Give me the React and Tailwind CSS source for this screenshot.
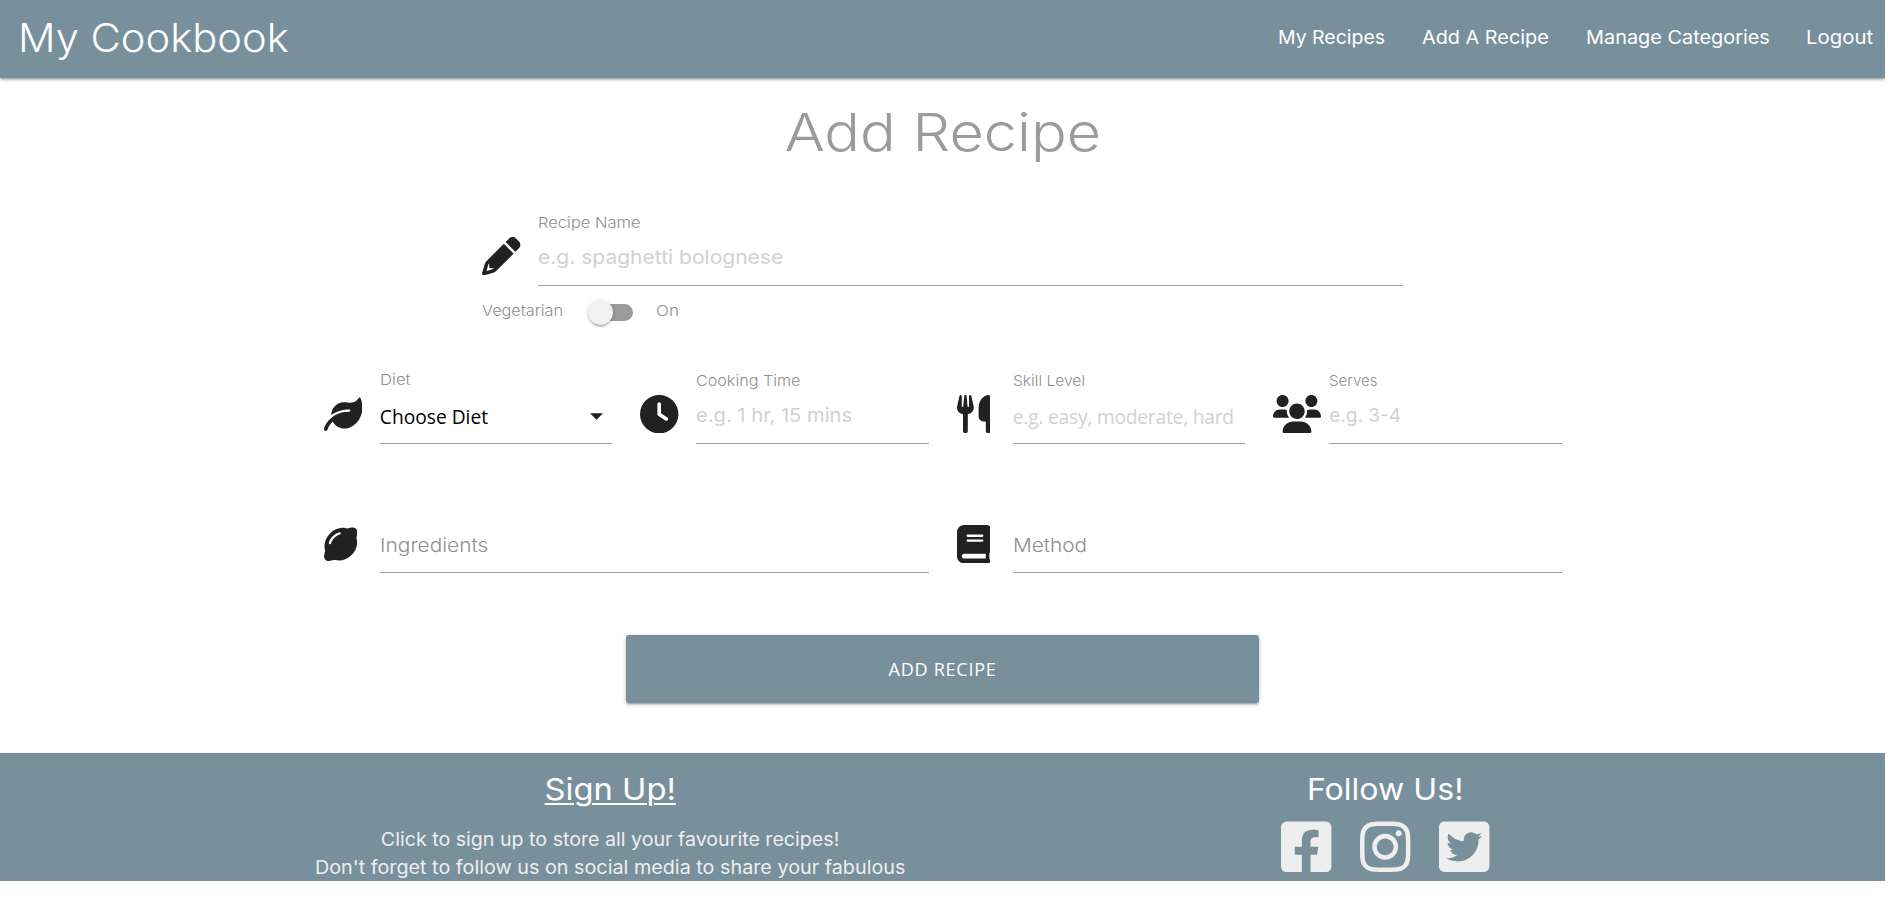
import { FaClock, FaUtensils, FaLemon } from "react-icons/fa6";
import { FaFacebookSquare, FaInstagram, FaTwitterSquare } from "react-icons/fa";

const SEGOE = "font-['Open_Sans','Noto_Sans',sans-serif]";

function PencilIcon({ className }) {
  return (
    <svg viewBox="0 0 512 512" fill="currentColor" className={className}>
      <path d="M421.7 220.3L188.5 453.4L154.6 419.5L158.1 416H112C103.2 416 96 408.8 96 400V353.9L92.51 357.4C87.78 362.2 84.31 368 82.42 374.4L59.44 452.6L137.6 429.6C143.1 427.7 149.8 424.2 154.6 419.5L188.5 453.4C178.1 463.8 165.2 471.5 151.1 475.6L30.77 511C22.35 513.5 13.24 511.2 7.03 504.1C.82 498.8-1.5 489.7 .976 481.2L36.37 360.9C40.53 346.8 48.16 333.9 58.57 323.5L291.7 90.34L421.7 220.3zM492.7 58.75C517.7 83.74 517.7 124.3 492.7 149.3L444.3 197.7L314.3 67.72L362.7 19.32C387.7-5.678 428.3-5.678 453.3 19.32L492.7 58.75z" />
    </svg>
  );
}

function LeafIcon({ className }) {
  return (
    <svg viewBox="0 0 512 512" fill="currentColor" className={className}>
      <path d="M512 165.4c0 127.9-70.05 235.3-175.3 270.1c-20.04 7.938-41.83 12.46-64.69 12.46c-64.9 0-125.2-36.51-155.7-94.47c-54.13 49.93-68.71 107-68.96 108.1C44.72 472.6 34.87 480 24.02 480c-1.844 0-3.727-.2187-5.602-.6562c-12.89-3.098-20.84-16.08-17.75-28.96c9.598-39.5 90.47-226.4 335.3-226.4C344.8 224 352 216.8 352 208S344.8 192 336 192C228.6 192 151 226.6 96.29 267.6c.1934-10.82 1.242-21.84 3.535-33.05c13.47-65.81 66.04-119 131.4-134.2c28.33-6.562 55.68-6.013 80.93-.0054c56 13.32 118.2-7.412 149.3-61.24c5.664-9.828 20.02-9.516 24.66 .8282C502.7 76.76 512 121.9 512 165.4z" />
    </svg>
  );
}

function UsersIcon({ className }) {
  return (
    <svg viewBox="0 0 640 512" fill="currentColor" className={className}>
      <path d="M319.9 320c57.41 0 103.1-46.56 103.1-104c0-57.44-46.54-104-103.1-104c-57.41 0-103.1 46.56-103.1 104C215.9 273.4 262.5 320 319.9 320zM369.9 352H270.1C191.6 352 128 411.7 128 485.3C128 500.1 140.7 512 156.4 512h327.2C499.3 512 512 500.1 512 485.3C512 411.7 448.4 352 369.9 352zM512 160c44.18 0 80-35.82 80-80S556.2 0 512 0c-44.18 0-80 35.82-80 80S467.8 160 512 160zM183.9 216c0-5.449 .9824-10.63 1.609-15.91C174.6 194.1 162.6 192 149.9 192H88.08C39.44 192 0 233.8 0 285.3C0 295.6 7.887 304 17.62 304h199.5C196.7 280.2 183.9 249.7 183.9 216zM128 160c44.18 0 80-35.82 80-80S172.2 0 128 0C83.82 0 48 35.82 48 80S83.82 160 128 160zM551.9 192h-61.84c-12.8 0-24.88 3.037-35.86 8.24C454.8 205.5 455.8 210.6 455.8 216c0 33.71-12.78 64.21-33.16 88h199.7C632.1 304 640 295.6 640 285.3C640 233.8 600.6 192 551.9 192z" />
    </svg>
  );
}

function BookIcon({ className }) {
  return (
    <svg viewBox="0 0 448 512" fill="currentColor" className={className}>
      <path d="M448 336v-288C448 21.49 426.5 0 400 0H96C42.98 0 0 42.98 0 96v320c0 53.02 42.98 96 96 96h320c17.67 0 32-14.33 32-31.1c0-11.72-6.607-21.52-16-27.1v-81.36C441.8 362.8 448 350.2 448 336zM143.1 128h192C344.8 128 352 135.2 352 144C352 152.8 344.8 160 336 160H143.1C135.2 160 128 152.8 128 144C128 135.2 135.2 128 143.1 128zM143.1 192h192C344.8 192 352 199.2 352 208C352 216.8 344.8 224 336 224H143.1C135.2 224 128 216.8 128 208C128 199.2 135.2 192 143.1 192zM384 448H96c-17.67 0-32-14.33-32-32c0-17.67 14.33-32 32-32h288V448z" />
    </svg>
  );
}

function Wide({ className = "", children }) {
  return <span className={`inline-block whitespace-nowrap ${className}`}>{children}</span>;
}

function Field({ icon, label, labelClass = "", children }) {
  return (
    <div className="flex pr-[14px] pl-[14.3px]">
      <div className="w-14 shrink-0 pt-6 text-[#212121]">{icon}</div>
      <div className="min-w-0 flex-1">
        <label className="block h-5 text-[14.8px] leading-5 font-light text-[#8f8f8f]">
          <Wide className={`origin-left ${labelClass}`}>{label}</Wide>
        </label>
        <div className="mt-1 h-[49px] border-b border-[#9e9e9e] pt-px text-[19px] leading-10 whitespace-nowrap text-[#d1d1d1]">
          {children}
        </div>
      </div>
    </div>
  );
}

function AreaField({ icon, label, labelClass }) {
  return (
    <div className="flex w-1/2 pr-[14px] pl-[14.3px]">
      <div className="w-14 shrink-0 text-[#212121]">{icon}</div>
      <div className="h-12 flex-1 border-b border-[#9e9e9e] text-[18.5px] leading-10 font-light text-[#8f8f8f]">
        <Wide className={`origin-left ${labelClass}`}>{label}</Wide>
      </div>
    </div>
  );
}

export default function App() {
  return (
    <div className="h-[904px] overflow-hidden bg-white font-['Inter',sans-serif]">
      <div className="flex h-[881px] w-[1885px] flex-col overflow-hidden">
        <header className="flex h-[78px] shrink-0 items-start justify-between bg-[#78909c] pl-[17.5px] leading-[76px] text-white shadow-[0_2px_2px_0_rgba(0,0,0,0.14),0_3px_1px_-2px_rgba(0,0,0,0.12),0_1px_5px_0_rgba(0,0,0,0.2)]">
          <a className="text-[39px] font-light">
            <Wide className="origin-left scale-x-[1.068]">My Cookbook</Wide>
          </a>
          <nav className="flex text-[18.5px] leading-[75px]">
            <a className="w-[143.5px]">
              <Wide className="origin-left scale-x-[1.053]">My Recipes</Wide>
            </a>
            <a className="w-[164px]">
              <Wide className="origin-left scale-x-[1.073]">Add A Recipe</Wide>
            </a>
            <a className="w-[220.5px]">
              <Wide className="origin-left scale-x-[1.075]">Manage Categories</Wide>
            </a>
            <a className="w-[79px]">
              <Wide className="origin-left scale-x-[1.1]">Logout</Wide>
            </a>
          </nav>
        </header>

        <main className="mx-auto w-[1266px] flex-1">
          <h1 className="mt-[14px] text-center text-[52.5px] leading-[80px] font-light text-[#9b9b9b]">
            <Wide className="scale-x-[1.131]">Add Recipe</Wide>
          </h1>

          <div className="mx-auto mt-[41px] w-[949px]">
            <Field
              icon={<PencilIcon className="size-[38.4px]" />}
              label="Recipe Name"
              labelClass="scale-x-[1.115]"
            >
              <Wide className="origin-left scale-x-[1.107]">e.g. spaghetti bolognese</Wide>
            </Field>
            <div className="mt-[14px] flex h-[25px] items-center pl-[13.8px] text-[14.8px] font-light text-[#8f8f8f]">
              <span className="w-[106.5px] pb-[3px]">
                <Wide className="origin-left scale-x-[1.1]">Vegetarian</Wide>
              </span>
              <span className="flex h-[17px] w-[45px] items-center rounded-full bg-[#9b9b9b]">
                <span className="size-[25px] shrink-0 rounded-full bg-[#f1f1f1] shadow-[0_3px_1px_-2px_rgba(0,0,0,0.2),0_2px_2px_0_rgba(0,0,0,0.14),0_1px_5px_0_rgba(0,0,0,0.12)]" />
              </span>
              <span className="ml-[23px] pb-[3px]">
                <Wide className="origin-left scale-x-[1.15]">On</Wide>
              </span>
            </div>
          </div>

          <div className="mt-[46px] grid grid-cols-4">
            <Field
              icon={<LeafIcon className="size-[38.4px]" />}
              label="Diet"
              labelClass="relative -top-px scale-x-[1.13]"
            >
              <div className={`flex items-center justify-between pt-px pr-[9px] text-[19.2px] text-black ${SEGOE}`}>
                <span>Choose Diet</span>
                <svg viewBox="0 0 14 7" className="-mt-px h-[7px] w-[13px]">
                  <path d="M0 0h14L7 7z" fill="#212121" />
                </svg>
              </div>
            </Field>
            <Field
              icon={<FaClock className="size-[38.4px]" />}
              label="Cooking Time"
              labelClass="scale-x-[1.09]"
            >
              <Wide className="origin-left scale-x-[1.06]">e.g. 1 hr, 15 mins</Wide>
            </Field>
            <Field
              icon={<FaUtensils className="h-[38.4px] w-[33.6px]" />}
              label="Skill Level"
              labelClass="scale-x-[1.055]"
            >
              <div className={`pt-px text-[19.2px] tracking-[-0.21px] ${SEGOE}`}>
                e.g. easy, moderate, hard
              </div>
            </Field>
            <Field
              icon={<UsersIcon className="h-[38.4px] w-[48px]" />}
              label="Serves"
              labelClass="scale-x-[1.02]"
            >
              <Wide>e.g. 3-4</Wide>
            </Field>
          </div>

          <div className="mt-[81px] flex">
            <AreaField
              icon={<FaLemon className="h-[38.4px] w-[33.6px]" />}
              label="Ingredients"
              labelClass="scale-x-[1.13]"
            />
            <AreaField
              icon={<BookIcon className="h-[38.4px] w-[33.6px]" />}
              label="Method"
              labelClass="scale-x-[1.125]"
            />
          </div>

          <button
            className={`mx-auto mt-[62px] block h-[68px] w-[633px] rounded-[3px] bg-[#78909c] text-[18px] tracking-[0.75px] text-white shadow-[0_2px_2px_0_rgba(0,0,0,0.14),0_3px_1px_-2px_rgba(0,0,0,0.12),0_1px_5px_0_rgba(0,0,0,0.2)] ${SEGOE}`}
          >
            ADD RECIPE
          </button>
        </main>

        <footer className="h-[128px] shrink-0 bg-[#78909c] text-white">
          <div className="mx-auto flex w-[1266px] justify-between pt-4 text-center">
            <div className="w-[602px]">
              <h5 className="text-[30px] leading-10">
                <Wide className="scale-x-[1.09] underline decoration-2 underline-offset-[3px]">Sign Up!</Wide>
              </h5>
              <p className="mt-4 flex flex-col items-center text-[18.5px] leading-7 text-[#eeeeee]">
                <Wide className="scale-x-[1.061]">Click to sign up to store all your favourite recipes!</Wide>
                <Wide className="scale-x-[1.069]">
                  Don't forget to follow us on social media to share your fabulous
                </Wide>
              </p>
            </div>
            <div className="w-[380px]">
              <h5 className="text-[30px] leading-10">
                <Wide className="scale-x-[1.07]">Follow Us!</Wide>
              </h5>
              <div className="mt-[9px] flex justify-center gap-[28.6px] text-[#eeeeee]">
                <FaFacebookSquare className="h-[57.6px] w-[50.4px]" />
                <FaInstagram className="h-[57.6px] w-[50.4px]" />
                <FaTwitterSquare className="h-[57.6px] w-[50.4px]" />
              </div>
            </div>
          </div>
        </footer>
      </div>
    </div>
  );
}
